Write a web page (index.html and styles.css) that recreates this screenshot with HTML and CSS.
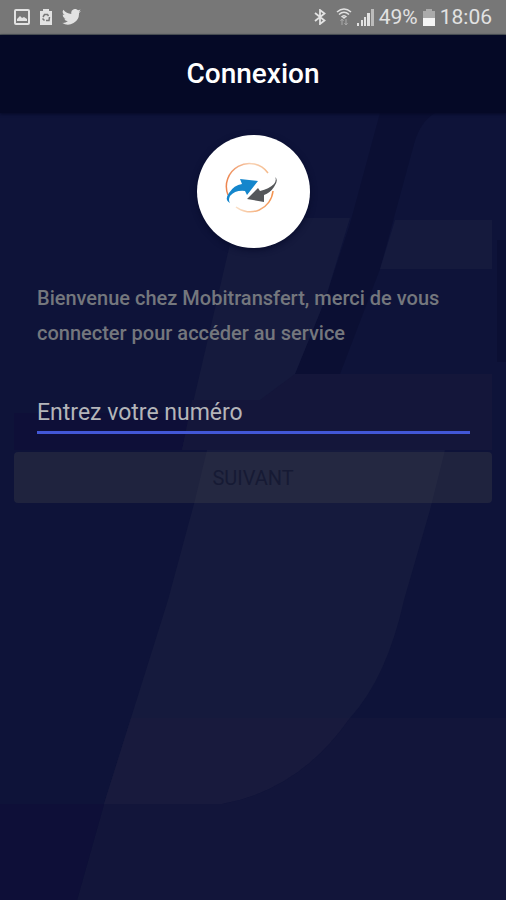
FILE: index.html
```html
<!DOCTYPE html>
<html lang="fr">
<head>
<meta charset="utf-8">
<meta name="viewport" content="width=device-width, initial-scale=1">
<title>Connexion</title>
<link rel="stylesheet" href="styles.css">
</head>
<body>
<div class="screen">
  <svg class="backdrop" viewBox="0 0 506 900" preserveAspectRatio="none" aria-hidden="true">
    <rect width="506" height="900" fill="#0e1339"/>
    <path d="M380 113H435Q420 122 414 144L380 269L340 374H295L325 300L350 224Z" fill="#0b0f33"/>
    <path d="M14 413H190L182 450H14Z" fill="#0e0f38"/>
    <path d="M236 218H350L325 300L295 374H492V450H445L430 510L404 600Q387 677 350 718Q300 790 222 804H104L168 600L195 500L207 450H182L203 360Z" fill="#151a3d"/>
    <path d="M395 220H492V269H380Z" fill="#151a3d"/>
    <path d="M295 374H492V450H182L192 400H260Z" fill="#14163a"/>
    <path d="M131 718H350Q300 790 222 804H104Z" fill="#181a3d"/>
    <path d="M350 718H506V900H77L104 804H222Q300 790 350 718Z" fill="#12153a"/>
    <path d="M0 804H104L77 900H0Z" fill="#0e0f38"/>
    <path d="M497 240H506V362H497Z" fill="#0b0f33"/>
  </svg>

  <div class="status">
    <div class="status-group">
      <svg class="icon-photo" viewBox="0 0 16 16" aria-hidden="true">
        <rect x="1" y="1" width="14" height="14" rx="1" fill="none" stroke="currentColor" stroke-width="2"/>
        <path d="M3 12V10L6 7L8 9L10 8L13 10V12Z" fill="currentColor"/>
      </svg>
      <svg class="icon-recycle" viewBox="0 0 12 16" aria-hidden="true">
        <path d="M3 0H9V2H12V16H0V2H3Z" fill="currentColor"/>
        <path d="M3 8L4.500 5.500H7.500L8.500 7M9.500 8L9 11.500H6M4.500 11.500L2.500 9.500" fill="none" stroke="#777" stroke-width="1.500"/>
      </svg>
      <svg class="icon-bird" viewBox="0 0 24 20" aria-hidden="true">
        <path d="M24 2.300a10 10 0 0 1-2.800.8A5 5 0 0 0 23.300.4a10 10 0 0 1-3.100 1.200A4.900 4.900 0 0 0 11.800 6.100 14 14 0 0 1 1.700.9a4.900 4.900 0 0 0 1.500 6.600 4.900 4.900 0 0 1-2.200-.6 4.900 4.900 0 0 0 3.900 4.900 5 5 0 0 1-2.200.1 4.900 4.900 0 0 0 4.600 3.400A10 10 0 0 1 0 17.400 14 14 0 0 0 21.500 4.900 10 10 0 0 0 24 2.300Z" fill="currentColor"/>
      </svg>
    </div>
    <div class="status-group status-right">
      <svg class="icon-bluetooth" viewBox="0 0 12 16" aria-hidden="true">
        <path d="M1 4L10.500 11.500L6 15V1L10.500 4.500L1 12" fill="none" stroke="currentColor" stroke-width="1.800"/>
      </svg>
      <svg class="icon-wifi" viewBox="0 0 16 18" aria-hidden="true">
        <path d="M1 4Q8-2 15 4M3 6.500Q8 2 13 6.500M5.500 9Q8 6.500 10.500 9" fill="none" stroke="currentColor" stroke-width="1.600"/>
        <path d="M6 9H10L8 11Z" fill="currentColor"/>
        <path d="M6 11V17M4.500 13L6 11L7.500 13M10 11V17M8.500 15L10 17L11.500 15" fill="none" stroke="#aaa"/>
      </svg>
      <svg class="icon-signal" viewBox="0 0 17 17" aria-hidden="true">
        <path d="M0 14H2V17H0ZM4 11H6V17H4ZM7 8H9V17H7ZM10 4H13V17H10Z" fill="currentColor"/>
        <path d="M14 0H17V17H14Z" fill="#bbb"/>
      </svg>
      <span>49%</span>
      <svg class="icon-battery" viewBox="0 0 12 17" aria-hidden="true">
        <path d="M3 0H9V2H12V9H0V2H3Z" fill="#aaa"/>
        <path d="M0 9H12V17H0Z" fill="#f4f4f4"/>
      </svg>
      <span>18:06</span>
    </div>
  </div>

  <header class="appbar"><h1>Connexion</h1></header>

  <main class="content">
    <div class="logo">
      <svg viewBox="0 0 113 113" aria-hidden="true">
        <defs>
          <linearGradient id="ring" x1="0" y1="0" x2="1" y2="0">
            <stop offset="0" stop-color="#ed8650"/>
            <stop offset=".6" stop-color="#f8d3b5"/>
            <stop offset="1" stop-color="#f5b98a"/>
          </linearGradient>
          <linearGradient id="ring-end" x1="0" y1="0" x2="1" y2="0">
            <stop offset="0" stop-color="#fae0c8"/>
            <stop offset="1" stop-color="#f3924e"/>
          </linearGradient>
        </defs>
        <path d="M31 60A23 23 0 0 1 71 38" fill="none" stroke="url(#ring)" stroke-width="1.500"/>
        <path d="M76 56A23 23 0 0 1 39 72" fill="none" stroke="url(#ring-end)" stroke-width="1.500"/>
        <path d="M33 68Q27 65 32 58Q37 50 45 49L43 44L61 46L50 60L48 56Q38 55 33 61Q31 65 33 68Z" fill="#1486cc"/>
        <path d="M78 42Q82 45 77 52Q73 58 67 60L67 67L50 64L61 53L63 56Q72 54 77 49Q80 45 78 42Z" fill="#55575a"/>
      </svg>
    </div>
    <form class="login">
      <p class="welcome">Bienvenue chez Mobitransfert, merci de vous connecter pour accéder au service</p>
      <input class="phone" type="tel" placeholder="Entrez votre numéro" aria-label="Entrez votre numéro">
      <button class="next" type="submit" disabled>SUIVANT</button>
    </form>
  </main>
</div>
</body>
</html>
```
FILE: styles.css
```css
* {
  box-sizing: border-box;
}

body {
  margin: 0;
  background: #0e1339;
  font-family: Roboto, "Liberation Sans", sans-serif;
}

.screen {
  position: relative;
  isolation: isolate;
  min-height: 100vh;
}

.backdrop {
  position: absolute;
  inset: 0;
  z-index: -1;
  width: 100%;
  height: 100%;
}

.status {
  display: flex;
  align-items: center;
  justify-content: space-between;
  height: 35px;
  padding: 0 14px;
  border-bottom: 1px solid #555b5b;
  background: #777;
  color: #e2e2e2;
  font-size: 21px;
  line-height: 24px;
}

.status-group {
  display: flex;
  align-items: center;
  gap: 10px;
}

.status-right {
  gap: 5px;
}

.status svg {
  display: block;
}

.icon-photo {
  width: 16px;
  height: 16px;
}

.icon-recycle {
  width: 12px;
  height: 16px;
}

.icon-bird {
  width: 19px;
  height: 16px;
}

.icon-bluetooth {
  width: 12px;
  height: 16px;
  margin-right: 5px;
}

.icon-wifi {
  width: 16px;
  height: 18px;
}

.icon-signal {
  width: 17px;
  height: 17px;
}

.icon-battery {
  width: 12px;
  height: 17px;
}

.appbar {
  display: flex;
  align-items: center;
  justify-content: center;
  height: 78px;
  background: #050926;
  box-shadow: 0 1px 3px #050926;
}

.appbar h1 {
  margin: 0;
  color: #fff;
  font-size: 28px;
  font-weight: 500;
  line-height: 32px;
}

.content {
  padding: 22px 14px;
}

.logo {
  width: 113px;
  height: 113px;
  margin: 0 auto;
  border-radius: 50%;
  background: #fff;
  box-shadow: 0 2px 6px #080c2c;
}

.logo svg {
  display: block;
  width: 100%;
  height: 100%;
}

.login {
  display: flex;
  flex-direction: column;
  margin-top: 33px;
}

.welcome {
  margin: 0 23px;
  color: #74777d;
  font-size: 20px;
  font-weight: 500;
  line-height: 35px;
}

.phone {
  height: 40px;
  margin: 43px 22px 18px 23px;
  padding: 0;
  border: 0;
  border-bottom: 3px solid #4257d6;
  border-radius: 0;
  outline: 0;
  background: transparent;
  color: #b4b5b9;
  font: 400 23px/32px Roboto, "Liberation Sans", sans-serif;
}

.phone::placeholder {
  color: #b4b5b9;
  opacity: 1;
}

.next {
  height: 51px;
  border: 0;
  border-radius: 4px;
  background: rgb(84 84 80 / 25%);
  color: #161a34;
  font: 400 20px/24px Roboto, "Liberation Sans", sans-serif;
}
```
